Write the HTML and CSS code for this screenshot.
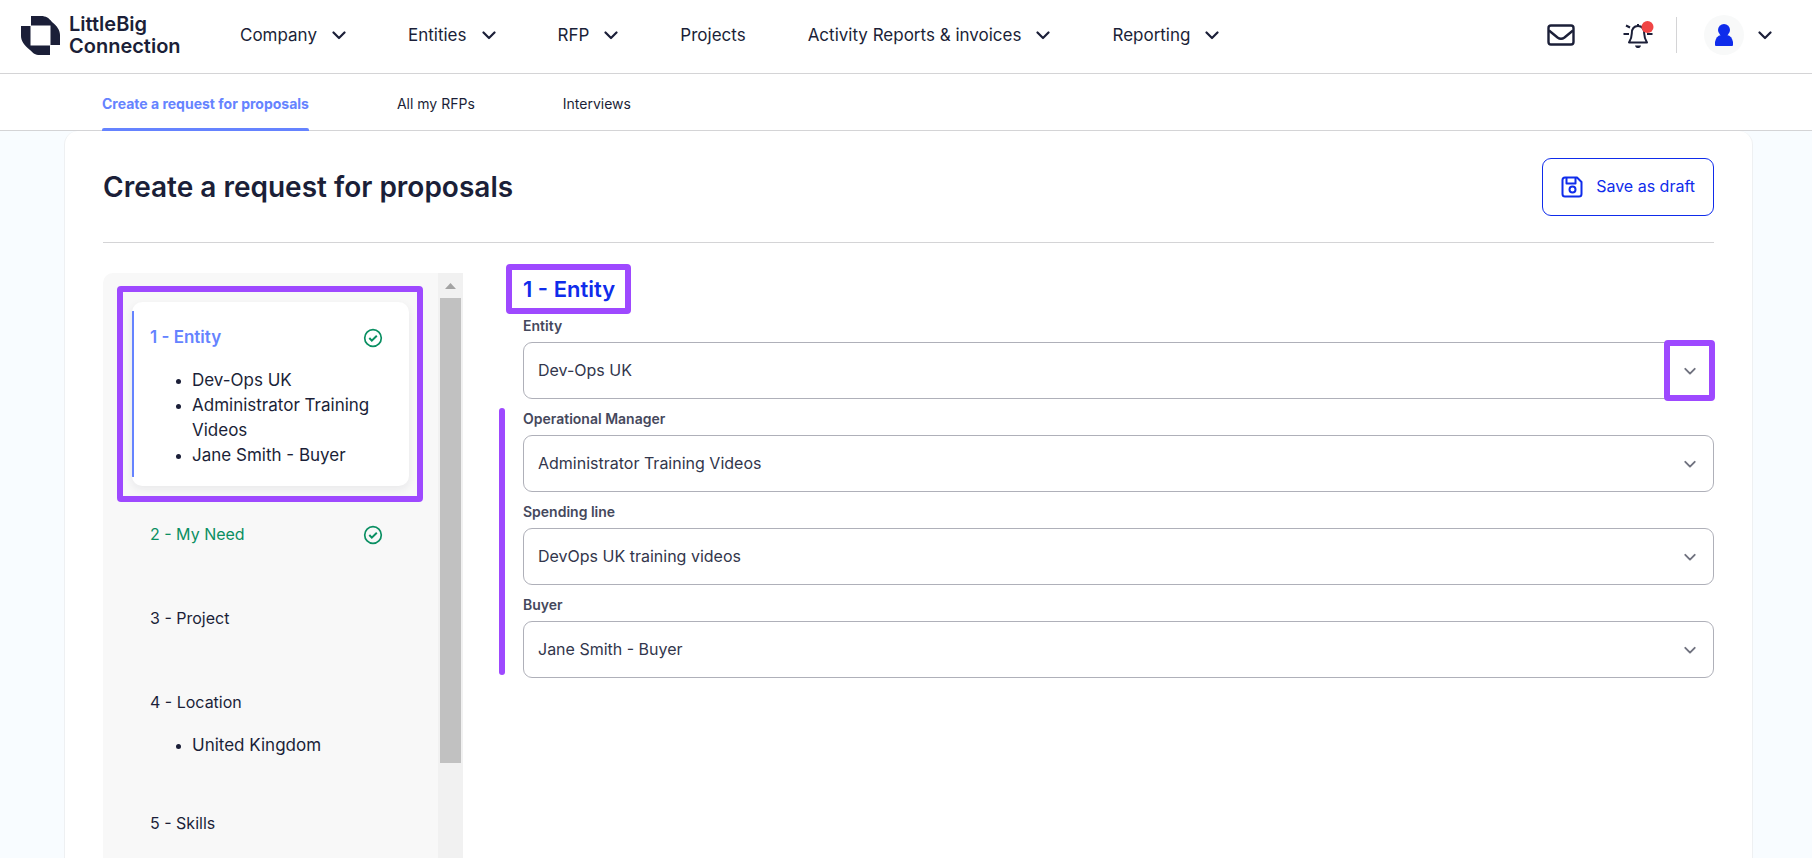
FILE: index.html
```html
<!DOCTYPE html>
<html lang="en">
<head>
<meta charset="utf-8">
<meta name="viewport" content="width=device-width, initial-scale=1">
<title>Create a request for proposals</title>
<link rel="stylesheet" href="styles.css">
</head>
<body>
<svg class="sprite" aria-hidden="true">
  <symbol id="chevron" viewBox="0 0 14 14"><path d="M1.500 4.500 7 10l5.500-5.500" fill="none" stroke="currentColor" stroke-width="2.200" stroke-linecap="round" stroke-linejoin="round"/></symbol>
  <symbol id="check" viewBox="0 0 20 20"><circle cx="10" cy="10" r="8.300" fill="none" stroke="currentColor" stroke-width="1.700"/><path d="m6.300 10 2.500 2.600 5-4.900" fill="none" stroke="currentColor" stroke-width="2"/></symbol>
</svg>
<header class="topbar">
  <a class="logo" href="#">
    <svg class="logo-mark" viewBox="0 0 39 39" aria-hidden="true"><path fill="#1b1f38" d="M10 0h10c5 0 8 2 11 6 5 4 8 8 8 13v10h-9.500V9.500H10zM0 10h9.500v19.500H29V39H19c-5 0-7-2-10-5-6-5-9-9-9-14z"/></svg>
    <span>LittleBig<br>Connection</span>
  </a>
  <nav class="mainnav" aria-label="Main">
    <a href="#">Company <svg class="chev"><use href="#chevron"/></svg></a>
    <a href="#">Entities <svg class="chev"><use href="#chevron"/></svg></a>
    <a href="#">RFP <svg class="chev"><use href="#chevron"/></svg></a>
    <a href="#">Projects</a>
    <a href="#">Activity Reports &amp; invoices <svg class="chev"><use href="#chevron"/></svg></a>
    <a href="#">Reporting <svg class="chev"><use href="#chevron"/></svg></a>
  </nav>
  <div class="tools">
    <button class="icon-btn mail" aria-label="Messages">
      <svg width="28" height="22" viewBox="0 0 28 22" fill="none" stroke="#1b1f38" stroke-width="2.400"><rect x="1.500" y="1.500" width="25" height="19" rx="2.500"/><path d="M2 6.500 10.500 13.500q3.500 2.500 7 0L26 6.500"/></svg>
    </button>
    <button class="icon-btn bell" aria-label="Notifications">
      <svg width="32" height="30" viewBox="0 0 32 30" fill="none" stroke="#1b1f38" stroke-width="2"><path d="M16 6c-4.500 0-6.200 3.500-6.200 7.500 0 4-.8 5.500-2.800 9h18c-2-3.500-2.800-5-2.800-9C22.200 9.500 20.500 6 16 6z" stroke-linejoin="round"/><path d="M16 4v3M1.500 14H7M25 14h5.500M4 5.500 8 7.500"/><path d="M13 25.500h6c-.5 2-1.500 2.500-3 2.500s-2.500-.5-3-2.500z" fill="#1b1f38" stroke="none"/><circle cx="25.500" cy="7" r="6" fill="#f04545" stroke="none"/></svg>
    </button>
    <span class="divider"></span>
    <button class="icon-btn account" aria-label="Account">
      <span class="avatar"><svg width="18" height="22" viewBox="0 0 18 22" fill="#0f2ceb"><circle cx="9" cy="6" r="6"/><path d="M0 21v-3Q1 12 6 11h6q5 1 6 7v3q0 1-1 1H1q-1 0-1-1z"/></svg></span>
      <svg class="chev"><use href="#chevron"/></svg>
    </button>
  </div>
</header>
<nav class="subnav" aria-label="RFP">
  <a class="active" href="#" aria-current="page">Create a request for proposals</a>
  <a href="#">All my RFPs</a>
  <a href="#">Interviews</a>
</nav>
<main class="page">
  <div class="card">
    <div class="card-head">
      <h1>Create a request for proposals</h1>
      <button class="save">
        <svg width="22" height="22" viewBox="0 0 22 22" fill="none" stroke="currentColor" stroke-width="2"><path d="M4 1.500h12l4.500 4.500v12q0 2.500-2.500 2.500H4Q1.500 20.500 1.500 18V4Q1.500 1.500 4 1.500zM5.500 2v5.500h9V2" stroke-linejoin="round"/><circle cx="11.500" cy="13.500" r="3"/></svg>
        Save as draft
      </button>
    </div>
    <div class="columns">
      <aside class="sidebar">
        <div class="steps">
          <section class="step current">
            <div class="step-head"><a href="#">1 - Entity</a><svg class="check"><use href="#check"/></svg></div>
            <ul>
              <li>Dev-Ops UK</li>
              <li>Administrator Training Videos</li>
              <li>Jane Smith - Buyer</li>
            </ul>
          </section>
          <section class="step done">
            <div class="step-head"><a href="#">2 - My Need</a><svg class="check"><use href="#check"/></svg></div>
          </section>
          <section class="step">
            <div class="step-head"><a href="#">3 - Project</a></div>
          </section>
          <section class="step">
            <div class="step-head"><a href="#">4 - Location</a></div>
            <ul><li>United Kingdom</li></ul>
          </section>
          <section class="step">
            <div class="step-head"><a href="#">5 - Skills</a></div>
          </section>
        </div>
        <div class="scrollbar" aria-hidden="true"><span class="arrow"></span><span class="thumb"></span></div>
      </aside>
      <form class="entity">
        <h2>1 - Entity</h2>
        <div class="field">
          <label for="entity">Entity</label>
          <div class="control marked"><select id="entity"><option>Dev-Ops UK</option></select><svg class="chev"><use href="#chevron"/></svg></div>
        </div>
        <div class="group">
          <div class="field">
            <label for="manager">Operational Manager</label>
            <div class="control"><select id="manager"><option>Administrator Training Videos</option></select><svg class="chev"><use href="#chevron"/></svg></div>
          </div>
          <div class="field">
            <label for="spending">Spending line</label>
            <div class="control"><select id="spending"><option>DevOps UK training videos</option></select><svg class="chev"><use href="#chevron"/></svg></div>
          </div>
          <div class="field">
            <label for="buyer">Buyer</label>
            <div class="control"><select id="buyer"><option>Jane Smith - Buyer</option></select><svg class="chev"><use href="#chevron"/></svg></div>
          </div>
        </div>
      </form>
    </div>
  </div>
</main>
</body>
</html>
```
FILE: styles.css
```css
:root {
  --ink: #1b1f38;
  --blue: #0f2ceb;
  --soft-blue: #6583ff;
  --green: #0a8f62;
  --mark: #9e49ff;
  --line: #d4d4d6;
}

*, *::before, *::after { box-sizing: border-box; }

body {
  margin: 0;
  height: 100vh;
  overflow: hidden;
  display: flex;
  flex-direction: column;
  background: #f8fcff;
  color: var(--ink);
  font: 16px/25px Inter, "Liberation Sans", sans-serif;
}

a { color: inherit; text-decoration: none; }
button { font: inherit; background: none; border: 0; padding: 0; color: inherit; }
h1, h2, ul { margin: 0; padding: 0; }
.sprite { display: none; }
.chev { width: 14px; height: 14px; flex: none; }

.topbar {
  display: flex;
  align-items: center;
  height: 74px;
  flex: none;
  padding: 0 40px 3px 21px;
  background: #fff;
  border-bottom: 1px solid var(--line);
}

.logo {
  display: flex;
  align-items: center;
  gap: 9px;
  width: 219px;
  font-size: 20px;
  line-height: 22px;
  font-weight: 600;
}
.logo-mark { width: 39px; height: 39px; }

.mainnav { display: flex; gap: 62px; white-space: nowrap; font-size: 17px; }
.mainnav a { display: flex; align-items: center; gap: 15px; }

.tools { display: flex; align-items: center; margin-left: auto; }
.icon-btn { display: flex; align-items: center; }
.bell { margin-left: 47px; }
.divider { width: 1px; height: 36px; margin-left: 22px; background: var(--line); }
.account { gap: 14px; margin-left: 27px; }
.avatar {
  display: grid;
  place-items: center;
  width: 40px;
  height: 40px;
  border-radius: 50%;
  background: #f8f9f9;
}

.subnav {
  display: flex;
  gap: 88px;
  height: 57px;
  flex: none;
  padding: 0 102px;
  background: #fff;
  border-bottom: 1px solid var(--line);
  font-size: 14px;
  line-height: 60px;
}
.subnav a { height: 57px; }
.subnav .active {
  position: relative;
  color: var(--soft-blue);
  font-weight: 700;
}
.subnav .active::after {
  content: "";
  position: absolute;
  inset: auto 0 0;
  height: 3px;
  border-radius: 2px 2px 0 0;
  background: var(--soft-blue);
}

.page { flex: 1; min-height: 0; display: flex; padding: 0 59px 0 64px; }
.card {
  flex: 1;
  min-width: 0;
  display: flex;
  flex-direction: column;
  padding: 0 38px;
  background: #fff;
  border: solid #eef0f2;
  border-width: 0 1px;
  border-radius: 14px 14px 0 0;
}
.card-head {
  display: flex;
  align-items: center;
  justify-content: space-between;
  flex: none;
  height: 112px;
  border-bottom: 1px solid var(--line);
}
h1 { font-size: 28px; line-height: 36px; font-weight: 600; }
.save {
  display: flex;
  align-items: center;
  gap: 13px;
  height: 58px;
  padding: 0 18px;
  border: 1px solid var(--blue);
  border-radius: 9px;
  color: var(--blue);
}

.columns { flex: 1; min-height: 0; display: flex; gap: 60px; padding-top: 30px; }
.sidebar {
  display: flex;
  width: 360px;
  flex: none;
  overflow: hidden;
  border-radius: 10px 0 0 0;
  background: #f8f8f8;
}
.steps { flex: 1; padding: 13px 15px 0 14px; }
.step { padding: 0 40px 0 33px; margin-bottom: 59px; }
.step-head { display: flex; align-items: center; justify-content: space-between; height: 25px; }
.check { width: 20px; height: 20px; color: var(--green); }
.step ul { padding-left: 42px; margin-top: 18px; font-size: 17px; }
.step + .step ul { margin-bottom: 53px; }
.step li::marker { font-size: 14px; }
.step:has(ul):not(.current) { margin-bottom: 53px; }
.done { color: var(--green); }
.current {
  position: relative;
  margin-bottom: 20px;
  padding: 33px 34px 28px 27px;
  border: 6px solid var(--mark);
  border-radius: 4px;
  isolation: isolate;
}
.current::before {
  content: "";
  position: absolute;
  inset: 10px 8px 10px 9px;
  z-index: -1;
  border-radius: 10px;
  background: linear-gradient(var(--soft-blue), var(--soft-blue)) 0 50% / 2px calc(100% - 18px) no-repeat #fff;
  box-shadow: 0 3px 8px rgba(27, 31, 56, .07);
}
.current .step-head a { color: var(--soft-blue); font-size: 17px; font-weight: 600; }

.scrollbar { width: 25px; padding: 0 2px; background: #f1f1f1; }
.arrow {
  display: block;
  height: 25px;
  background: linear-gradient(#a3a3a3, #a3a3a3) 50% 10px / 11px 6px no-repeat;
  clip-path: polygon(50% 10px, 16px 16px, 5px 16px);
}
.thumb { display: block; height: 465px; background: #c1c1c1; }

.entity { flex: 1; min-width: 0; }
h2 {
  width: max-content;
  margin: -9px 0 0 -17px;
  padding: 6px 10px 6px 11px;
  border: 6px solid var(--mark);
  border-radius: 4px;
  color: var(--blue);
  font-size: 22px;
  line-height: 26px;
  font-weight: 600;
}
.field { padding-top: 2px; }
.field label {
  display: block;
  height: 26px;
  color: #45485c;
  font-size: 14px;
  line-height: 20px;
  font-weight: 600;
}
.group { position: relative; }
.group .field { padding-top: 10px; }
.group::before {
  content: "";
  position: absolute;
  top: 9px;
  bottom: 3px;
  left: -24px;
  width: 6px;
  border-radius: 3px;
  background: var(--mark);
}
.control { position: relative; }
.control select {
  display: block;
  appearance: none;
  width: 100%;
  height: 57px;
  padding: 0 50px 0 14px;
  border: 1px solid #afb0b9;
  border-radius: 9px;
  background: #fff;
  color: #32364c;
  font: inherit;
}
.control .chev {
  position: absolute;
  right: 18px;
  top: 23px;
  width: 12px;
  height: 12px;
  color: #70727f;
}
.marked::after {
  content: "";
  position: absolute;
  inset: -2px -1px -2px auto;
  width: 51px;
  border: 6px solid var(--mark);
  border-radius: 4px;
}
```
